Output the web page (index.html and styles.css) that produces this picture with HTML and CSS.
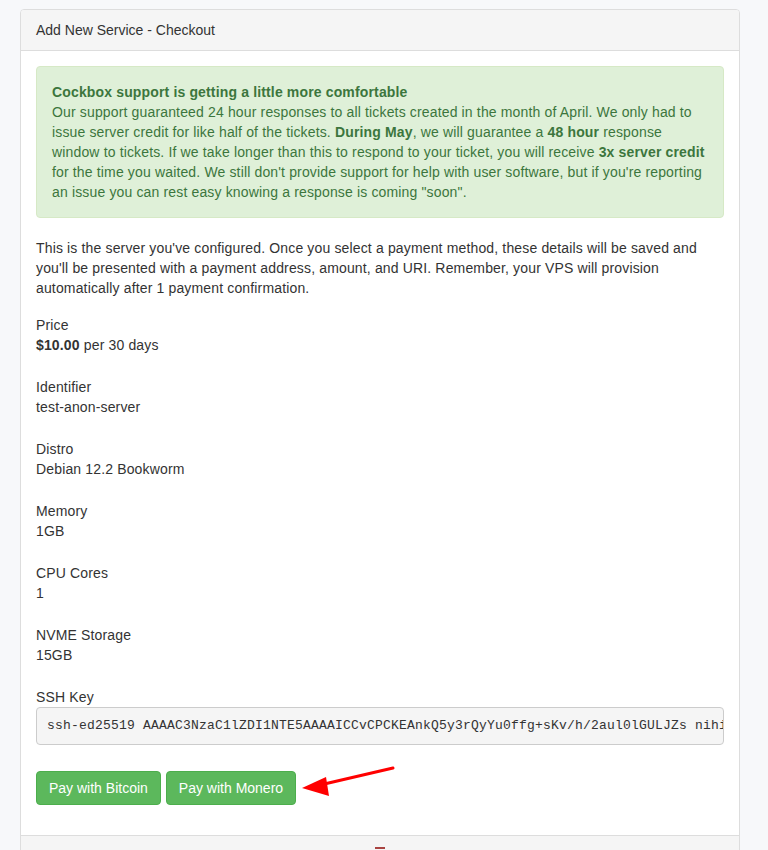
FILE: index.html
```html
<!DOCTYPE html>
<html lang="en">

<head>
    <meta charset="UTF-8" />
    <title>Checkout</title>
    <link rel="stylesheet" href="styles.css">
</head>

<body>
    <div class="wrap">
        <div class="panel">
            <div class="panel-heading">Add New Service - Checkout</div>
            <div class="panel-body">
                <!-- 公告 -->
                <div class="alert">
                    <strong>Cockbox support is getting a little more comfortable</strong><br>
                    Our support guaranteed 24 hour responses to all tickets created in the month of April. We only had to
                    issue server credit for like half of the tickets. <strong>During May</strong>, we will guarantee a
                    <strong>48 hour</strong> response window to tickets. If we take longer than this to respond to your
                    ticket, you will receive <strong>3x server credit</strong> for the time you waited. We still don't
                    provide support for help with user software, but if you're reporting an issue you can rest easy
                    knowing a response is coming "soon".
                </div>
                <p class="intro">This is the server you've configured. Once you select a payment method, these details
                    will be saved and you'll be presented with a payment address, amount, and URI. Remember, your VPS
                    will provision automatically after 1 payment confirmation.</p>
                <!-- 配置详情 -->
                <p class="item">Price<br><strong>$10.00</strong> per 30 days</p>
                <p class="item">Identifier<br>test-anon-server</p>
                <p class="item">Distro<br>Debian 12.2 Bookworm</p>
                <p class="item">Memory<br>1GB</p>
                <p class="item">CPU Cores<br>1</p>
                <p class="item">NVME Storage<br>15GB</p>
                <p class="label">SSH Key</p>
                <pre class="key">ssh-ed25519 AAAAC3NzaC1lZDI1NTE5AAAAICCvCPCKEAnkQ5y3rQyYu0ffg+sKv/h/2aul0lGULJZs nihilist@home</pre>
                <div class="actions">
                    <button class="btn">Pay with Bitcoin</button>
                    <button class="btn">Pay with Monero</button>
                    <svg class="arrow" width="110" height="40" viewBox="0 0 110 40">
                        <line x1="97" y1="4" x2="24" y2="21" stroke="#f00" stroke-width="3" stroke-linecap="round" />
                        <polygon points="6,24 30,13 33,32" fill="#f00" />
                    </svg>
                </div>
            </div>
            <div class="panel-footer"><span class="mark"></span></div>
        </div>
    </div>
</body>

</html>
```
FILE: styles.css
```css
body {
    margin: 0;
    padding: 0;
    background-color: #f7f8fa;
    font-family: "Liberation Sans", Arial, sans-serif;
    font-size: 14px;
    line-height: 20px;
    letter-spacing: 0.15px;
    color: #333;
}

.wrap {
    padding: 9px 28px 0 20px;
}

.panel {
    width: 720px;
    box-sizing: border-box;
    background-color: #fff;
    border: 1px solid #ddd;
    border-radius: 4px;
}

.panel-heading {
    padding: 10px 15px;
    background-color: #f5f5f5;
    border-bottom: 1px solid #ddd;
    border-radius: 3px 3px 0 0;
    letter-spacing: 0;
}

.panel-body {
    padding: 15px 15px 30px;
}

.alert {
    padding: 15px;
    margin-bottom: 20px;
    background-color: #dff0d8;
    border: 1px solid #d6e9c6;
    border-radius: 4px;
    color: #3c763d;
}

p {
    margin: 0;
}

.intro {
    margin-bottom: 17px;
}

.item {
    margin-bottom: 22px;
}

.key {
    margin: 0 0 26px;
    padding: 8px 10px;
    height: 20px;
    line-height: 20px;
    overflow: hidden;
    font-family: "Liberation Mono", "Courier New", monospace;
    font-size: 13px;
    letter-spacing: 0.2px;
    color: #333;
    background-color: #f5f5f5;
    border: 1px solid #ccc;
    border-radius: 4px;
    white-space: pre;
}

.actions {
    position: relative;
    display: flex;
    gap: 5px;
}

.btn {
    height: 34px;
    padding: 6px 12px;
    font-family: inherit;
    font-size: 14px;
    line-height: 20px;
    letter-spacing: 0;
    color: #fff;
    background-color: #5cb85c;
    border: 1px solid #4cae4c;
    border-radius: 4px;
}

.arrow {
    position: absolute;
    left: 260px;
    top: -7px;
}

.panel-footer {
    height: 40px;
    padding: 11px 15px 0;
    box-sizing: border-box;
    background-color: #f5f5f5;
    border-top: 1px solid #ddd;
    text-align: center;
}

.mark {
    display: inline-block;
    width: 10px;
    height: 10px;
    vertical-align: top;
    border-top: 2px solid #a94442;
    box-sizing: border-box;
}
```
